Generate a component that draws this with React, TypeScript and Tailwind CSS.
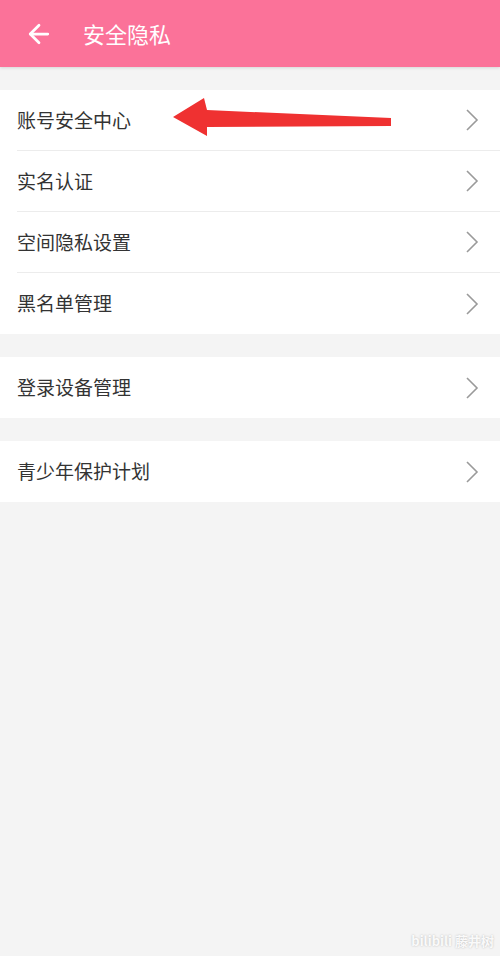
import { ArrowLeft } from "lucide-react";

const groups = [
  ["账号安全中心", "实名认证", "空间隐私设置", "黑名单管理"],
  ["登录设备管理"],
  ["青少年保护计划"],
];

function Chevron() {
  return (
    <svg width="14" height="22" viewBox="0 0 14 22" className="text-[#9a9a9a]">
      <polyline points="2,1 12,11 2,21" fill="none" stroke="currentColor" strokeWidth="1.6" />
    </svg>
  );
}

export default function App() {
  return (
    <div
      className="w-[500px] h-[956px] bg-[#f4f4f4] relative overflow-hidden"
      style={{ fontFamily: '"Noto Sans CJK SC", "Noto Sans", sans-serif' }}
    >
      {/* 顶部栏 */}
      <div className="h-[67px] bg-[#fb7299] flex items-center shadow-[0_1px_3px_rgba(0,0,0,0.12)]">
        <ArrowLeft className="ml-[24px] text-white" size={30} strokeWidth={2.2} />
        <h1 className="ml-[29px] text-[22px] text-white">安全隐私</h1>
      </div>

      <div className="flex flex-col gap-[23px] pt-[23px]">
        {groups.map((g, gi) => (
          <div key={gi} className="bg-white">
            {g.map((label, i) => (
              <div key={label} className="pl-[17px]">
                <div
                  className={`h-[61px] flex items-center justify-between pr-[21px] ${
                    i < g.length - 1 ? "border-b border-[#ececec]" : ""
                  }`}
                >
                  <span className="text-[19px] text-[#333]">{label}</span>
                  <Chevron />
                </div>
              </div>
            ))}
          </div>
        ))}
      </div>

      {/* 红色箭头标注 */}
      <svg className="absolute left-0 top-0" width="500" height="956" viewBox="0 0 500 956">
        <polygon
          points="173,117 204,98 207,110 391,118 391,126 207,127 207,136"
          fill="#ef3131"
        />
      </svg>

      {/* 水印 */}
      <div className="absolute right-[6px] bottom-[6px] text-[13px] text-white/90 font-bold [text-shadow:0_0_2px_rgba(0,0,0,0.25)]">
        bilibili 藤井树
      </div>
    </div>
  );
}
